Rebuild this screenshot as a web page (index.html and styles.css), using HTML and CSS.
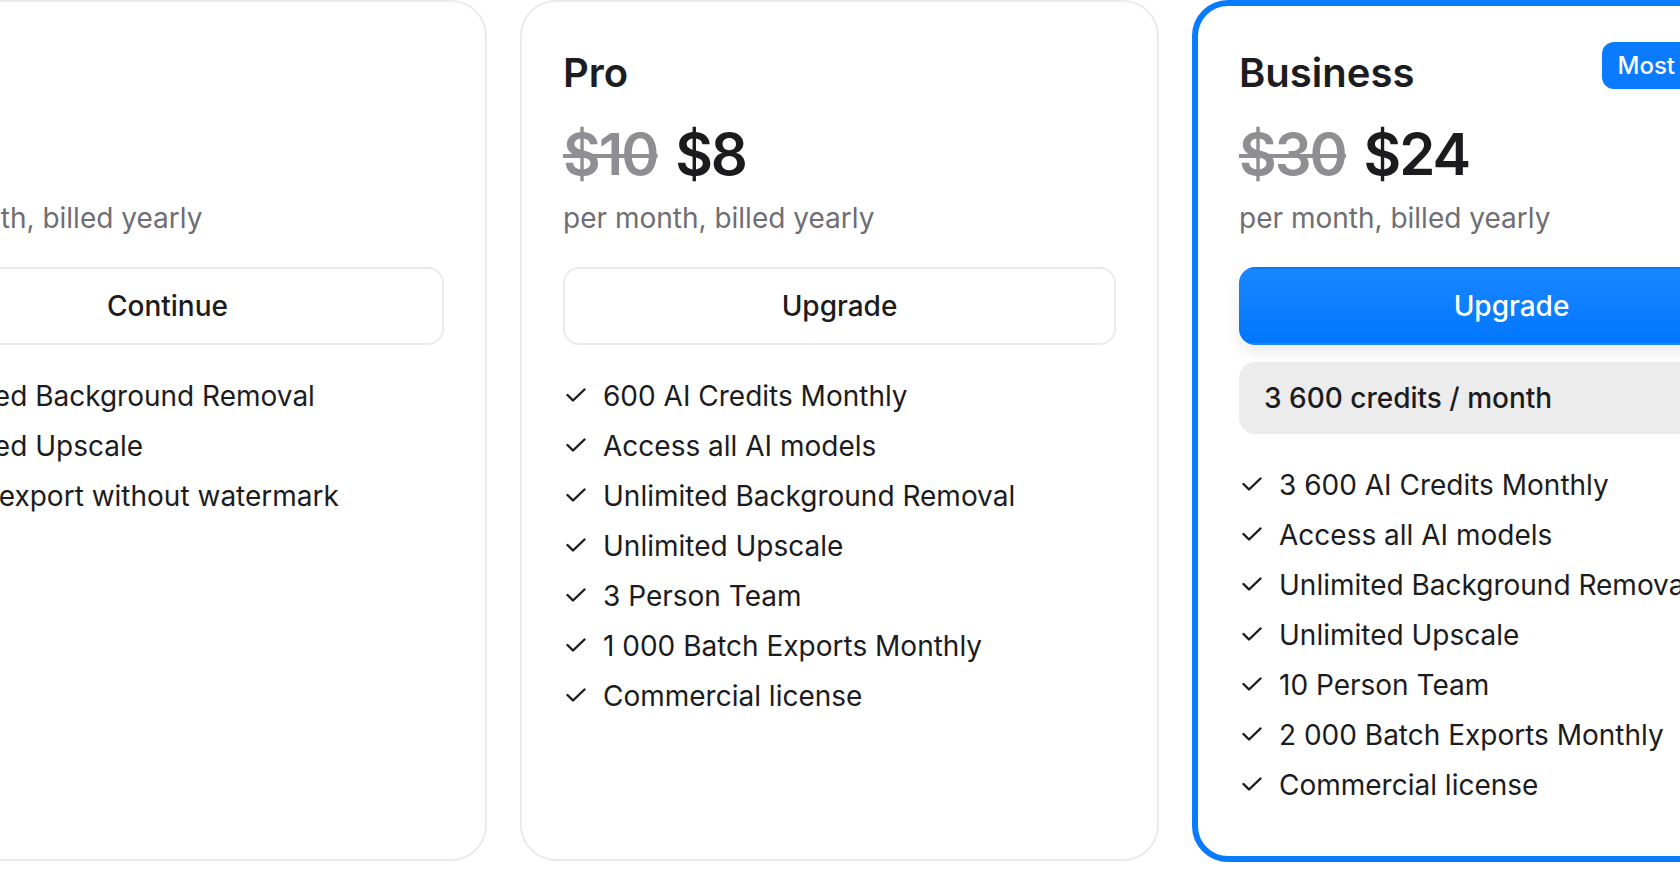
FILE: index.html
```html
<!DOCTYPE html>
<html lang="en">
<head>
  <meta charset="UTF-8">
  <title>Plans</title>
  <link rel="stylesheet" href="styles.css">
</head>
<body>

  <div class="plans">

    <section class="plan">
      <div class="plan-head">
        <h2>Free</h2>
      </div>
      <div class="price"><span class="now">$0</span></div>
      <p class="period">per month, billed yearly</p>
      <button class="btn">Continue</button>
      <ul class="features">
        <li><svg width="20" height="14" viewBox="0 0 20 14"><polyline points="1.5,7 7,12.5 18.5,1.5"/></svg>Limited Background Removal</li>
        <li><svg width="20" height="14" viewBox="0 0 20 14"><polyline points="1.5,7 7,12.5 18.5,1.5"/></svg>Limited Upscale</li>
        <li><svg width="20" height="14" viewBox="0 0 20 14"><polyline points="1.5,7 7,12.5 18.5,1.5"/></svg>PNG export without watermark</li>
      </ul>
    </section>

    <section class="plan">
      <div class="plan-head">
        <h2>Pro</h2>
      </div>
      <div class="price"><span class="old">$10</span> <span class="now">$8</span></div>
      <p class="period">per month, billed yearly</p>
      <button class="btn">Upgrade</button>
      <ul class="features">
        <li><svg width="20" height="14" viewBox="0 0 20 14"><polyline points="1.5,7 7,12.5 18.5,1.5"/></svg>600 AI Credits Monthly</li>
        <li><svg width="20" height="14" viewBox="0 0 20 14"><polyline points="1.5,7 7,12.5 18.5,1.5"/></svg>Access all AI models</li>
        <li><svg width="20" height="14" viewBox="0 0 20 14"><polyline points="1.5,7 7,12.5 18.5,1.5"/></svg>Unlimited Background Removal</li>
        <li><svg width="20" height="14" viewBox="0 0 20 14"><polyline points="1.5,7 7,12.5 18.5,1.5"/></svg>Unlimited Upscale</li>
        <li><svg width="20" height="14" viewBox="0 0 20 14"><polyline points="1.5,7 7,12.5 18.5,1.5"/></svg>3 Person Team</li>
        <li><svg width="20" height="14" viewBox="0 0 20 14"><polyline points="1.5,7 7,12.5 18.5,1.5"/></svg>1 000 Batch Exports Monthly</li>
        <li><svg width="20" height="14" viewBox="0 0 20 14"><polyline points="1.5,7 7,12.5 18.5,1.5"/></svg>Commercial license</li>
      </ul>
    </section>

    <section class="plan featured">
      <div class="plan-head">
        <h2>Business</h2>
        <span class="badge">Most popular</span>
      </div>
      <div class="price"><span class="old">$30</span> <span class="now">$24</span></div>
      <p class="period">per month, billed yearly</p>
      <button class="btn primary">Upgrade</button>
      <div class="credits">3 600 credits / month</div>
      <ul class="features">
        <li><svg width="20" height="14" viewBox="0 0 20 14"><polyline points="1.5,7 7,12.5 18.5,1.5"/></svg>3 600 AI Credits Monthly</li>
        <li><svg width="20" height="14" viewBox="0 0 20 14"><polyline points="1.5,7 7,12.5 18.5,1.5"/></svg>Access all AI models</li>
        <li><svg width="20" height="14" viewBox="0 0 20 14"><polyline points="1.5,7 7,12.5 18.5,1.5"/></svg>Unlimited Background Removal</li>
        <li><svg width="20" height="14" viewBox="0 0 20 14"><polyline points="1.5,7 7,12.5 18.5,1.5"/></svg>Unlimited Upscale</li>
        <li><svg width="20" height="14" viewBox="0 0 20 14"><polyline points="1.5,7 7,12.5 18.5,1.5"/></svg>10 Person Team</li>
        <li><svg width="20" height="14" viewBox="0 0 20 14"><polyline points="1.5,7 7,12.5 18.5,1.5"/></svg>2 000 Batch Exports Monthly</li>
        <li><svg width="20" height="14" viewBox="0 0 20 14"><polyline points="1.5,7 7,12.5 18.5,1.5"/></svg>Commercial license</li>
      </ul>
    </section>

  </div>

</body>
</html>
```

FILE: styles.css
```css
body {
  margin: 0;
  font-family: Inter, "Noto Sans", sans-serif;
  color: #1c1c1e;
  background-color: #fff;
  overflow: hidden;
}

.plans {
  display: flex;
  gap: 33px;
  margin-left: -152px;
}

.plan {
  flex: 0 0 639px;
  box-sizing: border-box;
  height: 861px;
  padding: 46px 41px 40px;
  border: 2px solid #ebebeb;
  border-radius: 36px;
}

.plan.featured {
  height: 862px;
  padding: 42px 41px 40px;
  border: 6px solid #0a7aff;
}

.plan-head {
  display: flex;
  justify-content: space-between;
  align-items: flex-start;
}

.plan-head h2 {
  margin: 0;
  font-size: 40px;
  line-height: 50px;
  font-weight: 600;
  color: #1d1d1f;
}

.badge {
  margin-top: -6px;
  padding: 9px 15px 9px 16px;
  border-radius: 12px;
  background-color: #0a7aff;
  color: #fff;
  font-size: 24px;
  line-height: 29px;
  font-weight: 500;
}

.price {
  margin-top: 21px;
  font-size: 58px;
  line-height: 70px;
  font-weight: 600;
  letter-spacing: -2px;
}

.price .old {
  color: #8e8e93;
  text-decoration: line-through;
  text-decoration-thickness: 4px;
}

.price .now {
  margin-left: 5px;
}

.period {
  margin: 12px 0 0;
  font-size: 28px;
  line-height: 34px;
  color: #6e6e73;
}

.btn {
  display: block;
  width: 100%;
  height: 78px;
  margin-top: 32px;
  border: 2px solid #ebebeb;
  border-radius: 16px;
  background-color: #fff;
  font-family: inherit;
  font-size: 28px;
  font-weight: 500;
  color: #1c1c1e;
}

.btn.primary {
  border-color: transparent;
  background: linear-gradient(#1a86ff, #0077ff);
  color: #fff;
  box-shadow: 0 8px 16px rgba(0, 0, 0, 0.08);
}

.credits {
  display: flex;
  align-items: center;
  height: 72px;
  margin-top: 17px;
  padding: 0 25px;
  border-radius: 16px;
  background-color: #ececec;
  font-size: 28px;
  font-weight: 500;
}

.features {
  list-style: none;
  margin: 26px 0 0;
  padding: 0;
}

.features li {
  display: flex;
  align-items: flex-start;
  font-size: 28px;
  line-height: 50px;
}

.features svg {
  flex-shrink: 0;
  margin: 17px 17px 0 3px;
  fill: none;
  stroke: #1c1c1e;
  stroke-width: 2.4;
  stroke-linecap: round;
  stroke-linejoin: round;
}
```
